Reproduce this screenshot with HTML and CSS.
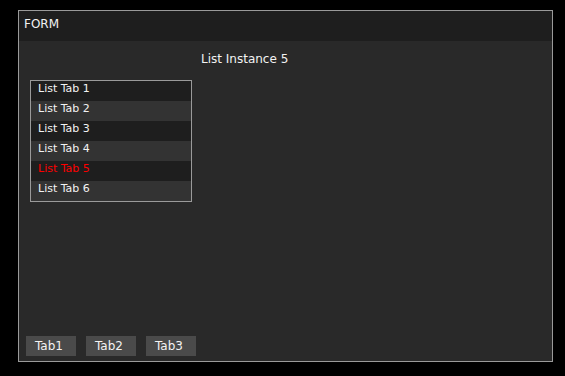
FILE: index.html
```html
<!DOCTYPE html>
<html lang="en">
<head>
  <meta charset="UTF-8" />
  <title>Form</title>
  <link rel="stylesheet" href="styles.css">
</head>
<body>
  <div class="form">
    <div class="form-header">FORM</div>
    <div class="form-body">
      <div class="title">List Instance 5</div>
      <ul class="list">
        <li>List Tab 1</li>
        <li>List Tab 2</li>
        <li>List Tab 3</li>
        <li>List Tab 4</li>
        <li class="active">List Tab 5</li>
        <li>List Tab 6</li>
      </ul>
      <div class="tabs">
        <button class="tab">Tab1</button>
        <button class="tab">Tab2</button>
        <button class="tab">Tab3</button>
      </div>
    </div>
  </div>
</body>
</html>
```

FILE: styles.css
```css
body {
  margin: 0;
  padding: 10px 0 0 18px;
  background: #000;
  color: #f2f2f2;
  font-family: "DejaVu Sans", sans-serif;
}
.form {
  width: 533px;
  height: 350px;
  border: 1px solid #9a9a9a;
  display: flex;
  flex-direction: column;
}
.form-header {
  height: 30px;
  line-height: 26px;
  padding-left: 5px;
  background: #1e1e1e;
  font-size: 12px;
}
.form-body {
  flex: 1;
  background: #292929;
  display: flex;
  flex-direction: column;
}
.title {
  margin-top: 10px;
  padding-left: 182px;
  font-size: 12px;
  line-height: 16px;
}
.list {
  list-style: none;
  margin: 13px 0 0 11px;
  padding: 0;
  width: 160px;
  border: 1px solid #9a9a9a;
}
.list li {
  height: 20px;
  line-height: 16px;
  padding-left: 7px;
  font-size: 11px;
  background: #1e1e1e;
}
.list li:nth-child(even) {
  background: #333;
}
.list li.active {
  color: #ff0000;
}
.tabs {
  margin-top: auto;
  display: flex;
  gap: 10px;
  padding: 0 0 5px 7px;
}
.tab {
  width: 50px;
  height: 20px;
  padding: 0 0 0 9px;
  text-align: left;
  border: none;
  background: #4a4a4a;
  color: #f2f2f2;
  font-family: "DejaVu Sans", sans-serif;
  font-size: 12px;
}
```
